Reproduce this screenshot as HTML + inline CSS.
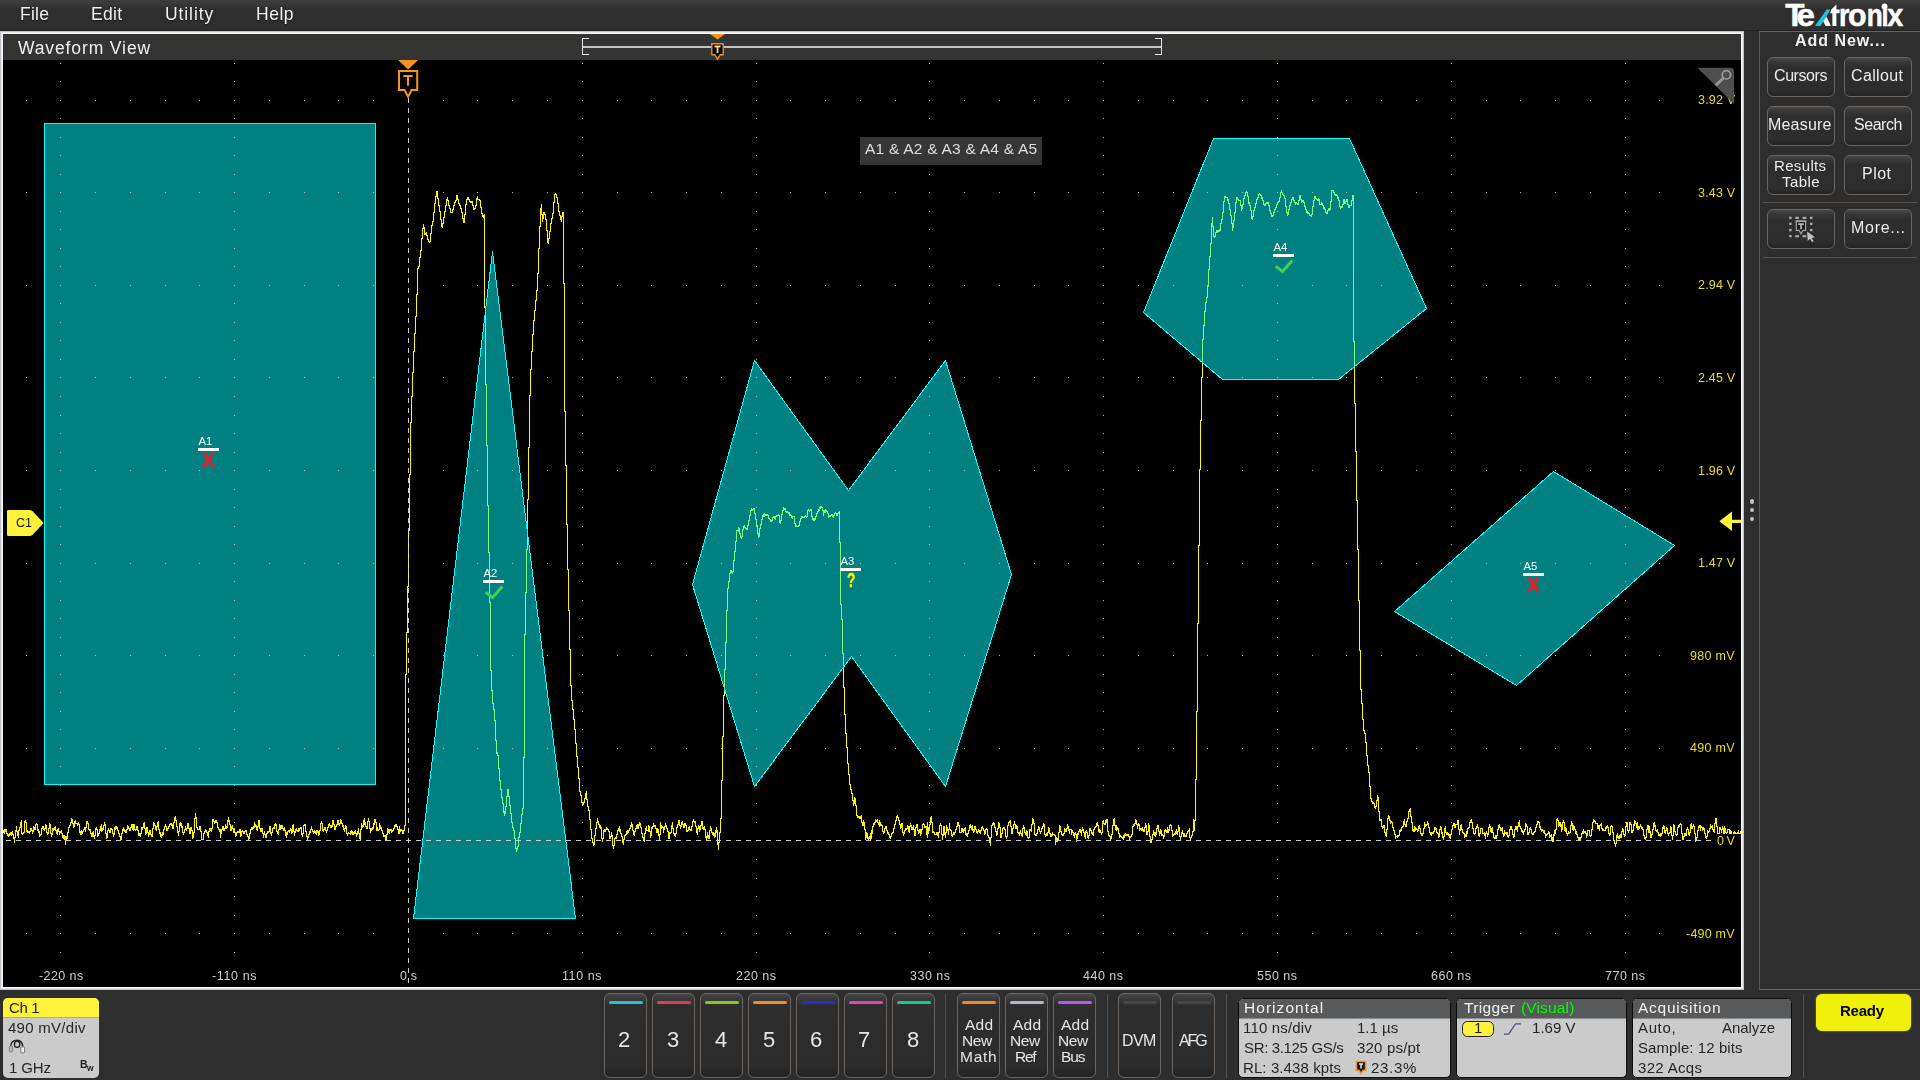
<!DOCTYPE html>
<html><head><meta charset="utf-8"><title>Waveform View</title>
<style>
*{box-sizing:border-box;margin:0;padding:0}
html,body{width:1920px;height:1080px;overflow:hidden;background:#2e2e2e;font-family:"Liberation Sans",sans-serif;}
body{position:relative}
.a{position:absolute}
.t{position:absolute;white-space:nowrap;line-height:1;will-change:transform;}
.menubar{left:0;top:0;width:1920px;height:31px;background:linear-gradient(#3e3e3e 0px,#3b3b3b 2.5px,#2e2e2e 9.5px,#2e2e2e 29.8px,#222 30px,#222 31px);}
.wvpanel{left:0;top:31px;width:1744px;height:959px;background:#000;box-shadow:inset 0 0 0 1px #c2c3c8,inset 0 0 0 2px #e7e8ec,inset 0 0 0 3px #f9f9fc;}
.wvtitle{left:3px;top:34px;width:1738px;height:26px;background:#343432;}
.rpanel{left:1759px;top:31px;width:170px;height:959px;border:1px solid #6a625c;border-left-color:#57585c;background:#2e2e2e;}
.btn{position:absolute;border:1px solid #6c645e;border-radius:6px;background:linear-gradient(#464748 0,#3a3a3b 3px,#2e2e2e 9px,#2d2d2d 32px,#232323 39px);}
.rb{width:68px;height:40px;}
.cb{top:993px;width:43px;height:85px;border-radius:6px;background:linear-gradient(#454546 0,#39393a 5px,#2d2d2d 13px,#2c2c2c 72px,#232323 84px);}
.cb i{position:absolute;left:4px;top:7px;width:34px;height:3px;border-radius:2px;display:block}
.sep{position:absolute;width:1px;background:#57514d;top:994px;height:84px}
.badge{position:absolute;top:998px;height:80px;border:1px solid #0c0c0c;border-radius:5px;background:#cbcbcb;overflow:hidden}
.badge .h{position:absolute;left:0;top:0;right:0;height:20px;background:#58595b;border-bottom:1px solid #8e8e8e}
</style></head><body>

<div class="a menubar"></div>
<div class="t" style="left:19.80px;top:6.00px;font-size:17.5px;color:#f2f2f2;letter-spacing:0.243px;text-shadow:0 1px 1px rgba(0,0,0,.6);">File</div>
<div class="t" style="left:91.20px;top:6.00px;font-size:17.5px;color:#f2f2f2;letter-spacing:0.335px;text-shadow:0 1px 1px rgba(0,0,0,.6);">Edit</div>
<div class="t" style="left:164.50px;top:6.00px;font-size:17.5px;color:#f2f2f2;letter-spacing:0.911px;text-shadow:0 1px 1px rgba(0,0,0,.6);">Utility</div>
<div class="t" style="left:256.20px;top:6.00px;font-size:17.5px;color:#f2f2f2;letter-spacing:0.511px;text-shadow:0 1px 1px rgba(0,0,0,.6);">Help</div>
<svg class="a" style="left:1784px;top:2px" width="124" height="28" viewBox="0 0 124 28">
<g fill="#fff" stroke="#fff" stroke-width="0.5" font-family="Liberation Sans" font-weight="bold" font-size="31">
<text x="1.2" y="24.07" textLength="19.2" lengthAdjust="spacingAndGlyphs">T</text>
<text x="12.6" y="24.07" textLength="18.4" lengthAdjust="spacingAndGlyphs">e</text>
<text x="55" y="24.07" textLength="10.5" lengthAdjust="spacingAndGlyphs">r</text>
<text x="64" y="24.07" textLength="18.6" lengthAdjust="spacingAndGlyphs">o</text>
<text x="82.8" y="24.07" textLength="16" lengthAdjust="spacingAndGlyphs">n</text>
<text x="97.6" y="24.07" textLength="7" lengthAdjust="spacingAndGlyphs">ı</text>
<text x="103.3" y="24.07" textLength="16" lengthAdjust="spacingAndGlyphs">x</text>
</g>
<circle cx="100.6" cy="4.5" r="2.9" fill="#fff"/>
<polygon points="30.9,24.07 36.6,24.07 46.4,7.5 42.7,7.5" fill="#22c3e0"/>
<polygon points="39.2,19.2 42.4,14.6 47,24.07 41.6,24.07" fill="#fff"/>
<path d="M47.3 7.5L52.4 2.4V7.5H55.6V11.2H52.4V24.07H48.4V11.2H46.2Z" fill="#fff"/>
</svg>
<div class="a wvpanel"></div><div class="a wvtitle"></div>
<div class="t" style="left:17.50px;top:40.00px;font-size:17.5px;color:#f0f0f0;letter-spacing:0.881px;">Waveform View</div>
<svg class="a" style="left:570px;top:34px" width="610" height="28" viewBox="570 34 610 28" shape-rendering="crispEdges">
<path d="M589 38.5H582.5V54.5H589" fill="none" stroke="#e6e6e6" stroke-width="1"/>
<path d="M1155 38.5H1161.5V54.5H1155" fill="none" stroke="#e6e6e6" stroke-width="1"/>
<rect x="583" y="46" width="578" height="2" fill="#c4c4c4"/>
<g shape-rendering="geometricPrecision">
<polygon points="710,34 725,34 717.5,39.5" fill="#f7931e"/>
<path d="M711.8 43.8H723.2V54.8H720.2L717.5 59.2L714.8 54.8H711.8Z" fill="#000" stroke="#f08c22" stroke-width="1.4"/>
<path d="M714.5 46.5H720.5M717.5 46.5V53" stroke="#f6d2a8" stroke-width="1.8" fill="none"/>
</g></svg>
<svg class="a" style="left:0;top:0" width="1744" height="990" viewBox="0 0 1744 990">
<defs><clipPath id="cp"><rect x="3" y="60" width="1738" height="927"/></clipPath></defs><g clip-path="url(#cp)">
<g shape-rendering="crispEdges">
<path d="M3 830v3M4 829v5M5 829v3M6 829v5M7 833v3M8 834v3M9 833v3M10 832v3M11 832v4M12 831v4M13 834v5M14 837v6M15 830v8M16 826v6M17 831v5M18 830v8M19 827v4M20 822v6M21 820v14M22 833v2M23 832v2M24 821v12M25 820v3M26 822v10M27 830v3M28 831v2M29 831v3M30 828v4M31 828v3M32 830v4M33 826v6M34 827v3M35 824v6M36 823v2M37 824v7M38 829v4M39 831v6M40 834v2M41 828v7M42 826v3M43 826v4M44 828v3M45 824v5M46 825v8M47 832v3M48 828v6M49 823v6M50 824v10M51 833v4M52 828v7M53 828v3M54 827v3M55 826v5M56 830v4M57 829v6M58 828v4M59 831v4M60 831v2M61 830v4M62 833v5M63 835v4M64 835v5M65 836v9M66 836v4M67 832v7M68 827v6M69 825v3M70 822v4M71 818v5M72 819v5M73 823v5M74 821v6M75 820v4M76 823v1M77 823v3M78 822v3M79 824v9M80 831v4M81 830v5M82 831v3M83 829v3M84 827v3M85 827v5M86 821v7M87 821v3M88 823v7M89 829v2M90 829v5M91 833v4M92 832v5M93 831v6M94 835v4M95 828v8M96 827v3M97 829v8M98 833v3M99 829v5M100 826v5M101 824v8M102 828v3M103 825v5M104 822v4M105 824v10M106 833v6M107 830v8M108 828v3M109 830v3M110 828v5M111 828v2M112 829v5M113 833v4M114 827v8M115 826v4M116 826v3M117 827v4M118 830v4M119 833v4M120 836v4M121 833v7M122 829v5M123 827v4M124 829v3M125 830v3M126 829v4M127 825v5M128 826v3M129 828v3M130 827v4M131 824v4M132 824v6M133 824v7M134 824v6M135 829v2M136 826v4M137 826v5M138 830v6M139 833v3M140 833v4M141 827v7M142 827v3M143 823v5M144 822v7M145 828v7M146 827v7M147 827v6M148 832v5M149 830v5M150 830v5M151 834v3M152 828v9M153 822v7M154 823v3M155 825v5M156 826v5M157 822v5M158 821v9M159 829v5M160 832v5M161 834v4M162 832v4M163 829v6M164 826v4M165 824v3M166 826v5M167 828v3M168 826v3M169 824v3M170 823v2M171 823v3M172 824v5M173 822v7M174 817v6M175 816v5M176 820v7M177 826v7M178 831v5M179 823v9M180 822v4M181 823v5M182 826v7M183 832v3M184 829v4M185 826v4M186 828v3M187 823v6M188 823v6M189 828v6M190 827v7M191 827v4M192 830v9M193 832v6M194 818v15M195 813v6M196 817v11M197 827v3M198 829v1M199 826v4M200 826v6M201 831v9M202 839v1M203 833v7M204 831v3M205 829v3M206 830v3M207 832v4M208 831v7M209 828v4M210 828v3M211 828v4M212 819v10M213 819v3M214 821v3M215 820v3M216 820v3M217 822v6M218 827v3M219 829v3M220 829v9M221 829v5M222 826v4M223 826v5M224 828v3M225 824v5M226 826v3M227 820v8M228 817v5M229 820v5M230 824v7M231 826v5M232 825v4M233 828v5M234 828v5M235 832v5M236 832v4M237 831v2M238 831v2M239 829v4M240 829v8M241 831v5M242 830v2M243 831v3M244 831v3M245 830v2M246 830v5M247 834v3M248 836v4M249 833v6M250 829v5M251 827v3M252 827v3M253 826v3M254 822v6M255 824v3M256 825v5M257 826v5M258 820v7M259 820v9M260 828v4M261 828v4M262 828v6M263 833v5M264 831v4M265 834v4M266 833v5M267 831v3M268 831v2M269 826v6M270 826v8M271 832v4M272 828v5M273 827v2M274 824v5M275 823v3M276 824v8M277 831v3M278 829v6M279 824v6M280 825v5M281 825v4M282 825v4M283 828v3M284 827v4M285 830v6M286 832v6M287 831v4M288 830v2M289 830v3M290 828v3M291 829v5M292 825v8M293 824v8M294 831v5M295 829v4M296 828v3M297 830v2M298 828v4M299 828v3M300 827v2M301 827v8M302 833v4M303 825v9M304 824v2M305 824v8M306 831v6M307 836v4M308 834v4M309 831v4M310 829v4M311 826v4M312 829v3M313 831v3M314 830v3M315 831v3M316 830v5M317 830v3M318 831v5M319 830v5M320 823v8M321 821v3M322 823v8M323 829v3M324 827v3M325 827v4M326 830v3M327 827v4M328 824v4M329 823v3M330 825v3M331 825v3M332 820v7M333 820v5M334 824v6M335 826v4M336 824v3M337 820v5M338 820v5M339 823v3M340 819v5M341 820v4M342 823v4M343 825v5M344 828v4M345 825v4M346 826v8M347 833v3M348 832v2M349 833v1M350 831v4M351 830v4M352 831v4M353 832v3M354 831v3M355 830v4M356 833v4M357 831v4M358 828v6M359 833v6M360 829v11M361 823v7M362 825v3M363 820v7M364 818v7M365 822v5M366 826v3M367 821v8M368 818v4M369 821v8M370 828v5M371 828v3M372 827v3M373 823v6M374 819v6M375 819v4M376 822v9M377 827v4M378 829v2M379 823v7M380 825v4M381 827v4M382 830v4M383 833v4M384 835v2M385 835v6M386 834v7M387 828v7M388 829v4M389 829v5M390 829v2M391 829v4M392 830v2M393 828v3M394 825v4M395 824v3M396 824v3M397 826v4M398 829v5M399 826v8M400 829v3M401 829v2M402 830v4M403 830v4M404 825v6M405 674v152M406 632v43M407 586v47M408 530v57M409 474v57M410 422v53M411 396v27M412 372v25M413 351v22M414 333v19M415 316v18M416 294v23M417 268v27M418 266v3M419 257v10M420 250v8M421 238v13M422 228v11M423 224v5M424 227v8M425 233v2M426 232v4M427 235v5M428 239v3M429 241v2M430 233v9M431 225v9M432 221v5M433 212v10M434 203v10M435 196v8M436 191v6M437 191v8M438 198v8M439 205v7M440 211v9M441 219v8M442 223v5M443 217v7M444 211v7M445 205v7M446 199v7M447 197v4M448 200v6M449 205v4M450 208v5M451 212v1M452 209v4M453 205v5M454 202v4M455 200v3M456 195v6M457 195v5M458 199v5M459 203v3M460 205v4M461 208v5M462 212v7M463 218v5M464 214v9M465 204v11M466 199v6M467 197v3M468 197v3M469 199v3M470 201v2M471 201v2M472 201v5M473 205v5M474 208v2M475 205v4M476 198v8M477 196v4M478 199v1M479 199v2M480 200v8M481 207v7M482 213v4M483 215v3M484 214v94M485 307v78M486 384v62M487 445v61M488 505v48M489 552v51M490 602v69M491 670v21M492 690v14M493 703v7M494 709v12M495 720v21M496 740v14M497 752v4M498 755v14M499 768v13M500 780v10M501 789v9M502 797v7M503 803v10M504 811v5M505 806v8M506 796v11M507 789v8M508 789v8M509 796v10M510 805v9M511 813v10M512 822v6M513 827v4M514 830v9M515 838v11M516 848v4M517 846v4M518 837v10M519 832v6M520 823v10M521 814v10M522 808v7M523 757v52M524 634v124M525 592v43M526 549v44M527 499v51M528 447v53M529 395v53M530 369v27M531 351v19M532 334v18M533 320v15M534 310v11M535 300v11M536 290v11M537 273v18M538 248v26M539 226v23M540 208v19M541 204v11M542 214v8M543 212v7M544 212v3M545 214v6M546 219v12M547 230v13M548 238v6M549 231v8M550 223v9M551 218v6M552 213v6M553 202v12M554 194v9M555 193v2M556 194v4M557 197v7M558 203v9M559 211v5M560 215v5M561 216v6M562 212v5M563 212v72M564 283v129M565 411v55M566 465v60M567 524v46M568 569v42M569 610v40M570 649v37M571 685v16M572 700v10M573 709v11M574 719v11M575 729v15M576 743v14M577 756v12M578 767v12M579 778v14M580 791v5M581 795v8M582 802v4M583 802v3M584 798v5M585 793v6M586 791v9M587 799v8M588 806v5M589 810v10M590 819v11M591 829v10M592 838v5M593 842v4M594 835v10M595 828v8M596 822v7M597 818v5M598 821v4M599 824v4M600 825v4M601 827v12M602 838v4M603 830v9M604 829v3M605 829v3M606 827v3M607 828v2M608 829v3M609 831v8M610 836v3M611 832v5M612 835v11M613 845v4M614 838v8M615 837v2M616 834v5M617 830v5M618 828v3M619 826v6M620 829v5M621 833v4M622 836v7M623 839v6M624 835v5M625 834v2M626 831v4M627 830v4M628 830v3M629 828v3M630 825v4M631 822v5M632 824v7M633 830v5M634 831v5M635 828v4M636 825v4M637 824v5M638 824v5M639 822v4M640 823v5M641 827v7M642 833v5M643 837v4M644 833v9M645 828v6M646 826v5M647 830v1M648 825v7M649 826v6M650 831v7M651 827v9M652 826v3M653 823v4M654 825v2M655 825v4M656 828v5M657 828v5M658 829v7M659 834v7M660 822v13M661 825v4M662 826v2M663 827v6M664 826v4M665 823v4M666 825v4M667 828v4M668 831v8M669 832v7M670 832v2M671 825v8M672 822v7M673 828v6M674 833v3M675 833v4M676 827v7M677 824v4M678 820v5M679 820v6M680 825v4M681 822v5M682 821v4M683 824v4M684 823v5M685 823v3M686 825v7M687 830v2M688 827v4M689 826v4M690 829v2M691 826v5M692 821v6M693 819v3M694 821v2M695 821v6M696 826v7M697 828v7M698 825v4M699 826v6M700 825v5M701 821v5M702 821v8M703 827v3M704 826v4M705 829v9M706 836v4M707 832v6M708 835v4M709 830v9M710 826v5M711 828v5M712 832v3M713 832v4M714 833v5M715 830v7M716 827v6M717 830v15M718 842v8M719 832v11M720 818v15M721 780v39M722 736v45M723 695v42M724 669v27M725 642v28M726 610v33M727 588v23M728 581v8M729 573v9M730 570v4M731 570v3M732 571v3M733 560v12M734 551v10M735 541v11M736 530v12M737 530v1M738 527v5M739 528v6M740 533v5M741 536v3M742 529v8M743 526v4M744 525v3M745 527v2M746 528v2M747 525v5M748 520v6M749 515v6M750 510v6M751 508v3M752 509v2M753 508v2M754 508v6M755 513v7M756 519v7M757 525v9M758 533v5M759 528v9M760 524v5M761 519v6M762 515v5M763 514v3M764 513v4M765 514v2M766 514v2M767 514v2M768 515v4M769 518v2M770 519v3M771 520v2M772 517v4M773 516v2M774 516v3M775 516v4M776 515v2M777 515v1M778 514v2M779 515v8M780 520v4M781 514v7M782 510v5M783 507v4M784 508v2M785 508v4M786 511v2M787 511v2M788 512v2M789 512v4M790 514v2M791 515v3M792 516v3M793 516v1M794 516v8M795 523v4M796 525v2M797 526v1M798 525v2M799 521v5M800 518v4M801 516v3M802 516v2M803 517v1M804 516v2M805 515v2M806 516v2M807 510v7M808 509v2M809 510v2M810 509v2M811 509v8M812 516v4M813 518v3M814 518v3M815 516v4M816 513v4M817 511v3M818 509v3M819 507v4M820 506v3M821 506v2M822 507v4M823 510v6M824 510v3M825 509v4M826 510v2M827 511v3M828 513v5M829 515v2M830 515v2M831 514v2M832 514v3M833 515v3M834 513v3M835 512v2M836 513v3M837 513v3M838 512v2M839 511v32M840 542v63M841 604v16M842 619v35M843 653v35M844 687v28M845 714v20M846 733v15M847 747v17M848 763v12M849 774v11M850 784v6M851 789v5M852 793v8M853 800v6M854 797v7M855 798v8M856 805v11M857 815v3M858 816v2M859 816v3M860 816v3M861 815v8M862 822v4M863 820v6M864 822v8M865 829v11M866 832v6M867 833v6M868 837v3M869 836v3M870 833v7M871 830v9M872 826v8M873 823v4M874 822v3M875 819v4M876 820v2M877 819v4M878 822v3M879 820v7M880 822v4M881 824v2M882 825v7M883 831v3M884 828v5M885 826v3M886 826v5M887 830v4M888 832v3M889 834v4M890 836v3M891 833v4M892 832v2M893 828v5M894 824v5M895 820v5M896 816v5M897 815v3M898 817v4M899 820v5M900 824v5M901 823v5M902 823v10M903 832v4M904 830v4M905 828v3M906 828v2M907 825v4M908 826v6M909 826v7M910 823v4M911 825v5M912 827v3M913 825v5M914 829v7M915 827v9M916 824v4M917 824v7M918 830v4M919 829v4M920 829v7M921 829v5M922 824v6M923 823v2M924 824v4M925 826v2M926 826v9M927 822v16M928 827v7M929 824v7M930 817v8M931 816v7M932 822v11M933 831v2M934 832v3M935 834v1M936 832v3M937 832v4M938 832v6M939 825v8M940 823v3M941 825v10M942 834v6M943 826v10M944 826v9M945 832v6M946 825v8M947 827v4M948 829v6M949 823v7M950 829v2M951 830v6M952 834v3M953 832v3M954 832v3M955 829v4M956 826v4M957 822v5M958 822v4M959 825v8M960 832v1M961 828v5M962 828v4M963 829v4M964 828v3M965 827v8M966 833v3M967 833v4M968 830v4M969 825v6M970 824v4M971 826v4M972 825v6M973 829v4M974 826v6M975 826v4M976 829v4M977 831v3M978 829v3M979 830v3M980 830v4M981 827v4M982 826v3M983 828v3M984 830v5M985 829v5M986 828v2M987 829v7M988 835v3M989 837v6M990 837v9M991 825v13M992 823v3M993 822v3M994 823v5M995 827v5M996 831v5M997 828v7M998 822v7M999 823v5M1000 827v11M1001 833v5M1002 828v6M1003 827v2M1004 827v3M1005 829v8M1006 836v3M1007 825v12M1008 822v4M1009 821v2M1010 820v7M1011 826v8M1012 828v6M1013 824v5M1014 821v4M1015 824v5M1016 825v4M1017 826v7M1018 832v2M1019 832v4M1020 830v4M1021 833v3M1022 828v9M1023 825v4M1024 827v6M1025 832v3M1026 830v6M1027 831v7M1028 837v2M1029 829v9M1030 829v2M1031 824v8M1032 818v7M1033 819v5M1034 823v12M1035 834v2M1036 833v3M1037 829v5M1038 826v4M1039 827v5M1040 831v3M1041 828v4M1042 826v3M1043 823v4M1044 824v11M1045 834v3M1046 833v3M1047 832v4M1048 827v6M1049 828v6M1050 833v4M1051 834v3M1052 832v4M1053 834v1M1054 834v2M1055 835v10M1056 837v5M1057 838v4M1058 832v8M1059 825v8M1060 826v6M1061 831v4M1062 834v2M1063 833v3M1064 828v6M1065 829v3M1066 828v4M1067 824v5M1068 826v5M1069 829v5M1070 829v1M1071 829v6M1072 830v3M1073 832v4M1074 833v5M1075 832v3M1076 834v8M1077 833v6M1078 831v4M1079 829v3M1080 829v4M1081 830v6M1082 827v4M1083 829v4M1084 832v5M1085 831v8M1086 830v3M1087 832v6M1088 835v4M1089 828v8M1090 828v3M1091 830v4M1092 832v3M1093 829v7M1094 827v3M1095 826v2M1096 823v4M1097 822v4M1098 825v7M1099 829v4M1100 830v3M1101 832v3M1102 821v12M1103 820v4M1104 823v2M1105 820v5M1106 819v4M1107 819v13M1108 831v5M1109 835v2M1110 836v4M1111 834v5M1112 825v10M1113 819v7M1114 818v8M1115 825v5M1116 825v6M1117 827v3M1118 828v6M1119 833v5M1120 835v2M1121 836v2M1122 837v2M1123 835v5M1124 834v4M1125 833v3M1126 834v2M1127 834v2M1128 834v3M1129 836v4M1130 836v2M1131 834v3M1132 826v9M1133 824v3M1134 823v3M1135 819v5M1136 820v5M1137 824v5M1138 823v3M1139 824v7M1140 828v2M1141 828v3M1142 827v4M1143 829v3M1144 827v5M1145 823v5M1146 825v10M1147 831v4M1148 823v9M1149 825v12M1150 836v7M1151 839v4M1152 834v6M1153 830v5M1154 832v4M1155 832v5M1156 828v7M1157 825v4M1158 825v7M1159 831v5M1160 829v5M1161 830v6M1162 834v2M1163 835v4M1164 830v7M1165 829v3M1166 830v3M1167 827v6M1168 829v4M1169 825v6M1170 824v2M1171 825v6M1172 830v7M1173 834v2M1174 833v2M1175 831v4M1176 829v5M1177 831v4M1178 825v7M1179 827v10M1180 836v4M1181 832v5M1182 830v4M1183 833v4M1184 833v4M1185 835v2M1186 833v4M1187 831v3M1188 830v2M1189 828v10M1190 837v3M1191 835v3M1192 831v5M1193 819v13M1194 820v11M1195 779v42M1196 711v69M1197 623v89M1198 545v79M1199 469v77M1200 420v50M1201 377v44M1202 339v39M1203 325v15M1204 311v15M1205 302v10M1206 297v6M1207 286v12M1208 269v18M1209 256v14M1210 243v14M1211 223v21M1212 217v10M1213 226v11M1214 236v2M1215 232v5M1216 230v3M1217 230v3M1218 230v2M1219 229v3M1220 223v8M1221 219v5M1222 212v8M1223 201v12M1224 196v6M1225 196v2M1226 197v1M1227 197v4M1228 199v5M1229 203v7M1230 209v7M1231 215v9M1232 223v8M1233 220v8M1234 212v9M1235 202v11M1236 197v6M1237 197v3M1238 199v2M1239 200v1M1240 200v6M1241 205v6M1242 204v5M1243 198v7M1244 195v4M1245 192v4M1246 191v2M1247 192v5M1248 196v8M1249 202v4M1250 205v6M1251 210v9M1252 216v4M1253 210v7M1254 207v4M1255 203v5M1256 199v5M1257 197v3M1258 194v4M1259 193v2M1260 194v2M1261 195v4M1262 197v4M1263 200v5M1264 204v2M1265 203v3M1266 202v2M1267 202v2M1268 202v4M1269 205v6M1270 210v4M1271 213v4M1272 215v2M1273 212v4M1274 209v4M1275 207v3M1276 204v4M1277 202v3M1278 201v2M1279 197v5M1280 192v6M1281 190v3M1282 192v3M1283 194v2M1284 195v4M1285 198v9M1286 206v7M1287 212v4M1288 209v6M1289 205v5M1290 202v4M1291 199v4M1292 197v3M1293 197v4M1294 200v3M1295 202v3M1296 202v2M1297 203v2M1298 200v5M1299 195v6M1300 195v5M1301 199v4M1302 200v2M1303 200v3M1304 202v5M1305 206v4M1306 209v4M1307 211v3M1308 212v2M1309 213v3M1310 215v1M1311 214v3M1312 206v9M1313 200v7M1314 196v5M1315 196v3M1316 198v2M1317 199v2M1318 198v3M1319 199v6M1320 204v1M1321 202v3M1322 203v3M1323 205v4M1324 207v3M1325 209v4M1326 212v2M1327 210v4M1328 208v3M1329 208v3M1330 201v9M1331 190v12M1332 190v1M1333 190v3M1334 192v3M1335 194v2M1336 194v2M1337 195v4M1338 197v4M1339 200v7M1340 206v3M1341 206v2M1342 204v4M1343 199v6M1344 199v5M1345 201v3M1346 199v3M1347 199v6M1348 204v4M1349 205v3M1350 205v1M1351 200v6M1352 195v6M1353 195v147M1354 341v63M1355 403v49M1356 451v50M1357 500v50M1358 549v52M1359 600v51M1360 650v40M1361 689v15M1362 703v17M1363 719v12M1364 730v4M1365 733v10M1366 742v14M1367 755v11M1368 765v8M1369 772v15M1370 786v13M1371 798v4M1372 801v3M1373 802v2M1374 803v5M1375 806v3M1376 800v7M1377 795v6M1378 797v15M1379 811v10M1380 819v2M1381 819v8M1382 826v3M1383 825v3M1384 825v8M1385 832v4M1386 829v8M1387 818v12M1388 815v4M1389 816v5M1390 820v4M1391 821v2M1392 822v6M1393 827v4M1394 830v5M1395 834v5M1396 836v1M1397 835v3M1398 835v2M1399 830v6M1400 829v3M1401 827v4M1402 826v2M1403 821v6M1404 819v6M1405 824v3M1406 821v6M1407 818v4M1408 811v8M1409 809v3M1410 808v9M1411 816v7M1412 822v9M1413 829v3M1414 826v6M1415 827v4M1416 828v2M1417 829v3M1418 826v5M1419 825v4M1420 828v6M1421 833v3M1422 833v3M1423 828v6M1424 822v7M1425 824v3M1426 824v2M1427 821v4M1428 823v5M1429 827v6M1430 832v3M1431 832v4M1432 832v2M1433 831v3M1434 827v5M1435 827v3M1436 828v5M1437 832v2M1438 833v5M1439 829v8M1440 826v4M1441 827v7M1442 832v6M1443 836v4M1444 828v9M1445 826v7M1446 832v3M1447 832v3M1448 833v3M1449 834v4M1450 834v5M1451 829v6M1452 825v5M1453 823v3M1454 823v5M1455 824v4M1456 824v1M1457 820v5M1458 820v10M1459 829v6M1460 825v6M1461 824v6M1462 829v4M1463 832v2M1464 833v5M1465 834v3M1466 831v6M1467 828v6M1468 827v2M1469 822v6M1470 820v3M1471 819v4M1472 822v7M1473 828v6M1474 833v2M1475 828v6M1476 826v3M1477 824v4M1478 827v9M1479 833v4M1480 828v6M1481 828v1M1482 828v6M1483 833v1M1484 832v4M1485 833v6M1486 831v3M1487 833v4M1488 827v8M1489 824v4M1490 826v6M1491 828v5M1492 827v6M1493 832v6M1494 837v2M1495 835v4M1496 835v4M1497 829v7M1498 825v5M1499 824v4M1500 827v4M1501 828v3M1502 827v7M1503 833v4M1504 830v6M1505 832v2M1506 832v3M1507 832v5M1508 835v3M1509 829v7M1510 826v4M1511 826v4M1512 829v6M1513 834v4M1514 829v8M1515 826v4M1516 826v4M1517 826v6M1518 822v5M1519 820v7M1520 826v3M1521 828v4M1522 830v3M1523 831v4M1524 829v3M1525 823v7M1526 824v3M1527 826v9M1528 832v3M1529 828v5M1530 827v3M1531 829v5M1532 833v2M1533 832v3M1534 831v2M1535 827v5M1536 824v4M1537 821v4M1538 821v2M1539 822v6M1540 826v4M1541 829v3M1542 829v2M1543 830v3M1544 830v4M1545 833v5M1546 834v2M1547 833v2M1548 831v3M1549 832v6M1550 835v2M1551 834v7M1552 837v5M1553 834v8M1554 830v6M1555 829v5M1556 819v11M1557 818v3M1558 820v7M1559 822v4M1560 822v5M1561 824v8M1562 822v8M1563 820v3M1564 822v9M1565 827v5M1566 828v6M1567 833v3M1568 831v3M1569 832v2M1570 825v8M1571 821v5M1572 823v7M1573 825v6M1574 826v4M1575 829v5M1576 831v4M1577 834v4M1578 837v3M1579 837v4M1580 837v3M1581 833v5M1582 831v3M1583 829v5M1584 831v2M1585 831v3M1586 833v5M1587 830v6M1588 830v1M1589 830v6M1590 835v2M1591 829v7M1592 822v8M1593 819v4M1594 820v2M1595 821v3M1596 823v1M1597 823v6M1598 825v4M1599 825v6M1600 824v2M1601 823v6M1602 828v3M1603 829v2M1604 830v1M1605 827v4M1606 826v3M1607 825v3M1608 827v7M1609 833v3M1610 826v9M1611 825v2M1612 826v7M1613 832v9M1614 840v4M1615 843v4M1616 835v9M1617 833v5M1618 836v3M1619 835v4M1620 834v4M1621 831v7M1622 828v4M1623 829v6M1624 834v3M1625 826v10M1626 822v5M1627 822v9M1628 830v3M1629 822v9M1630 822v3M1631 824v9M1632 830v3M1633 824v7M1634 820v6M1635 821v3M1636 823v5M1637 822v8M1638 826v4M1639 826v3M1640 824v3M1641 826v3M1642 827v3M1643 829v7M1644 835v4M1645 837v3M1646 829v9M1647 825v5M1648 825v8M1649 826v7M1650 831v7M1651 834v4M1652 829v6M1653 823v7M1654 822v5M1655 825v6M1656 830v2M1657 829v4M1658 832v4M1659 834v2M1660 833v4M1661 833v3M1662 827v7M1663 825v4M1664 826v7M1665 830v4M1666 827v4M1667 828v6M1668 833v3M1669 832v2M1670 826v7M1671 827v9M1672 835v5M1673 824v12M1674 825v7M1675 831v4M1676 834v2M1677 827v8M1678 825v3M1679 824v3M1680 823v2M1681 824v10M1682 833v7M1683 836v4M1684 833v4M1685 833v3M1686 829v7M1687 827v3M1688 829v6M1689 832v4M1690 824v9M1691 823v6M1692 826v3M1693 824v3M1694 826v8M1695 833v9M1696 837v3M1697 830v8M1698 826v5M1699 825v3M1700 825v6M1701 826v2M1702 827v4M1703 827v3M1704 828v6M1705 833v5M1706 836v3M1707 830v7M1708 831v2M1709 828v4M1710 824v5M1711 826v2M1712 825v5M1713 829v3M1714 823v10M1715 818v6M1716 818v9M1717 826v9M1718 833v4M1719 827v7M1720 827v3M1721 829v4M1722 826v4M1723 828v8M1724 826v9M1725 828v5M1726 832v4M1727 829v4M1728 829v1M1729 829v7M1730 830v4M1731 831v6M1732 834v4M1733 832v3M1734 831v3M1735 832v5M1736 833v4M1737 832v3M1738 830v4M1739 833v2M1740 831v3" transform="translate(0.5,0)" stroke="#fff400" stroke-width="1" fill="none"/>
<polygon points="44.5,123.5 375.5,123.5 375.5,784.5 44.5,784.5" fill="rgba(0,255,255,0.5)" stroke="none"/>
<polygon points="492.5,251.5 413.5,918.5 575.5,918.5" fill="rgba(0,255,255,0.5)" stroke="none"/>
<polygon points="692.5,584.5 754.5,360.5 848.5,490.5 945.5,360.5 1011.5,574.5 945.5,786.5 851.5,656.5 754.5,786.5" fill="rgba(0,255,255,0.5)" stroke="none"/>
<polygon points="1213.5,138.5 1349.5,138.5 1426.5,308.5 1338.5,379.5 1222.5,379.5 1143.5,312.5" fill="rgba(0,255,255,0.5)" stroke="none"/>
<polygon points="1553.5,471.5 1674.5,545.5 1516.5,685.5 1394.5,611.5" fill="rgba(0,255,255,0.5)" stroke="none"/>
<polygon points="44.5,123.5 375.5,123.5 375.5,784.5 44.5,784.5" fill="none" stroke="#00ffff" stroke-width="1"/>
<polygon points="492.5,251.5 413.5,918.5 575.5,918.5" fill="none" stroke="#00ffff" stroke-width="1"/>
<polygon points="692.5,584.5 754.5,360.5 848.5,490.5 945.5,360.5 1011.5,574.5 945.5,786.5 851.5,656.5 754.5,786.5" fill="none" stroke="#00ffff" stroke-width="1"/>
<polygon points="1213.5,138.5 1349.5,138.5 1426.5,308.5 1338.5,379.5 1222.5,379.5 1143.5,312.5" fill="none" stroke="#00ffff" stroke-width="1"/>
<polygon points="1553.5,471.5 1674.5,545.5 1516.5,685.5 1394.5,611.5" fill="none" stroke="#00ffff" stroke-width="1"/>
<path d="M26 100h1M26 192h1M26 285h1M26 377h1M26 470h1M26 563h1M26 655h1M26 748h1M26 933h1M60 63h1M60 81h1M60 100h1M60 118h1M60 137h1M60 155h1M60 174h1M60 192h1M60 211h1M60 229h1M60 248h1M60 266h1M60 285h1M60 303h1M60 322h1M60 340h1M60 359h1M60 377h1M60 396h1M60 415h1M60 433h1M60 452h1M60 470h1M60 489h1M60 507h1M60 526h1M60 544h1M60 563h1M60 581h1M60 600h1M60 618h1M60 637h1M60 655h1M60 674h1M60 692h1M60 711h1M60 729h1M60 748h1M60 766h1M60 785h1M60 803h1M60 822h1M60 859h1M60 878h1M60 896h1M60 915h1M60 933h1M60 952h1M95 100h1M95 192h1M95 285h1M95 377h1M95 470h1M95 563h1M95 655h1M95 748h1M95 933h1M130 100h1M130 192h1M130 285h1M130 377h1M130 470h1M130 563h1M130 655h1M130 748h1M130 933h1M165 100h1M165 192h1M165 285h1M165 377h1M165 470h1M165 563h1M165 655h1M165 748h1M165 933h1M199 100h1M199 192h1M199 285h1M199 377h1M199 470h1M199 563h1M199 655h1M199 748h1M199 933h1M234 63h1M234 81h1M234 100h1M234 118h1M234 137h1M234 155h1M234 174h1M234 192h1M234 211h1M234 229h1M234 248h1M234 266h1M234 285h1M234 303h1M234 322h1M234 340h1M234 359h1M234 377h1M234 396h1M234 415h1M234 433h1M234 452h1M234 470h1M234 489h1M234 507h1M234 526h1M234 544h1M234 563h1M234 581h1M234 600h1M234 618h1M234 637h1M234 655h1M234 674h1M234 692h1M234 711h1M234 729h1M234 748h1M234 766h1M234 785h1M234 803h1M234 822h1M234 859h1M234 878h1M234 896h1M234 915h1M234 933h1M234 952h1M269 100h1M269 192h1M269 285h1M269 377h1M269 470h1M269 563h1M269 655h1M269 748h1M269 933h1M304 100h1M304 192h1M304 285h1M304 377h1M304 470h1M304 563h1M304 655h1M304 748h1M304 933h1M338 100h1M338 192h1M338 285h1M338 377h1M338 470h1M338 563h1M338 655h1M338 748h1M338 933h1M373 100h1M373 192h1M373 285h1M373 377h1M373 470h1M373 563h1M373 655h1M373 748h1M373 933h1M443 100h1M443 192h1M443 285h1M443 377h1M443 470h1M443 563h1M443 655h1M443 748h1M443 933h1M477 100h1M477 192h1M477 285h1M477 377h1M477 470h1M477 563h1M477 655h1M477 748h1M477 933h1M512 100h1M512 192h1M512 285h1M512 377h1M512 470h1M512 563h1M512 655h1M512 748h1M512 933h1M547 100h1M547 192h1M547 285h1M547 377h1M547 470h1M547 563h1M547 655h1M547 748h1M547 933h1M582 63h1M582 81h1M582 100h1M582 118h1M582 137h1M582 155h1M582 174h1M582 192h1M582 211h1M582 229h1M582 248h1M582 266h1M582 285h1M582 303h1M582 322h1M582 340h1M582 359h1M582 377h1M582 396h1M582 415h1M582 433h1M582 452h1M582 470h1M582 489h1M582 507h1M582 526h1M582 544h1M582 563h1M582 581h1M582 600h1M582 618h1M582 637h1M582 655h1M582 674h1M582 692h1M582 711h1M582 729h1M582 748h1M582 766h1M582 785h1M582 803h1M582 822h1M582 859h1M582 878h1M582 896h1M582 915h1M582 933h1M582 952h1M617 100h1M617 192h1M617 285h1M617 377h1M617 470h1M617 563h1M617 655h1M617 748h1M617 933h1M651 100h1M651 192h1M651 285h1M651 377h1M651 470h1M651 563h1M651 655h1M651 748h1M651 933h1M686 100h1M686 192h1M686 285h1M686 377h1M686 470h1M686 563h1M686 655h1M686 748h1M686 933h1M721 100h1M721 192h1M721 285h1M721 377h1M721 470h1M721 563h1M721 655h1M721 748h1M721 933h1M756 63h1M756 81h1M756 100h1M756 118h1M756 137h1M756 155h1M756 174h1M756 192h1M756 211h1M756 229h1M756 248h1M756 266h1M756 285h1M756 303h1M756 322h1M756 340h1M756 359h1M756 377h1M756 396h1M756 415h1M756 433h1M756 452h1M756 470h1M756 489h1M756 507h1M756 526h1M756 544h1M756 563h1M756 581h1M756 600h1M756 618h1M756 637h1M756 655h1M756 674h1M756 692h1M756 711h1M756 729h1M756 748h1M756 766h1M756 785h1M756 803h1M756 822h1M756 859h1M756 878h1M756 896h1M756 915h1M756 933h1M756 952h1M790 100h1M790 192h1M790 285h1M790 377h1M790 470h1M790 563h1M790 655h1M790 748h1M790 933h1M825 100h1M825 192h1M825 285h1M825 377h1M825 470h1M825 563h1M825 655h1M825 748h1M825 933h1M860 100h1M860 192h1M860 285h1M860 377h1M860 470h1M860 563h1M860 655h1M860 748h1M860 933h1M895 100h1M895 192h1M895 285h1M895 377h1M895 470h1M895 563h1M895 655h1M895 748h1M895 933h1M929 63h1M929 81h1M929 100h1M929 118h1M929 137h1M929 155h1M929 174h1M929 192h1M929 211h1M929 229h1M929 248h1M929 266h1M929 285h1M929 303h1M929 322h1M929 340h1M929 359h1M929 377h1M929 396h1M929 415h1M929 433h1M929 452h1M929 470h1M929 489h1M929 507h1M929 526h1M929 544h1M929 563h1M929 581h1M929 600h1M929 618h1M929 637h1M929 655h1M929 674h1M929 692h1M929 711h1M929 729h1M929 748h1M929 766h1M929 785h1M929 803h1M929 822h1M929 859h1M929 878h1M929 896h1M929 915h1M929 933h1M929 952h1M964 100h1M964 192h1M964 285h1M964 377h1M964 470h1M964 563h1M964 655h1M964 748h1M964 933h1M999 100h1M999 192h1M999 285h1M999 377h1M999 470h1M999 563h1M999 655h1M999 748h1M999 933h1M1034 100h1M1034 192h1M1034 285h1M1034 377h1M1034 470h1M1034 563h1M1034 655h1M1034 748h1M1034 933h1M1068 100h1M1068 192h1M1068 285h1M1068 377h1M1068 470h1M1068 563h1M1068 655h1M1068 748h1M1068 933h1M1103 63h1M1103 81h1M1103 100h1M1103 118h1M1103 137h1M1103 155h1M1103 174h1M1103 192h1M1103 211h1M1103 229h1M1103 248h1M1103 266h1M1103 285h1M1103 303h1M1103 322h1M1103 340h1M1103 359h1M1103 377h1M1103 396h1M1103 415h1M1103 433h1M1103 452h1M1103 470h1M1103 489h1M1103 507h1M1103 526h1M1103 544h1M1103 563h1M1103 581h1M1103 600h1M1103 618h1M1103 637h1M1103 655h1M1103 674h1M1103 692h1M1103 711h1M1103 729h1M1103 748h1M1103 766h1M1103 785h1M1103 803h1M1103 822h1M1103 859h1M1103 878h1M1103 896h1M1103 915h1M1103 933h1M1103 952h1M1138 100h1M1138 192h1M1138 285h1M1138 377h1M1138 470h1M1138 563h1M1138 655h1M1138 748h1M1138 933h1M1173 100h1M1173 192h1M1173 285h1M1173 377h1M1173 470h1M1173 563h1M1173 655h1M1173 748h1M1173 933h1M1207 100h1M1207 192h1M1207 285h1M1207 377h1M1207 470h1M1207 563h1M1207 655h1M1207 748h1M1207 933h1M1242 100h1M1242 192h1M1242 285h1M1242 377h1M1242 470h1M1242 563h1M1242 655h1M1242 748h1M1242 933h1M1277 63h1M1277 81h1M1277 100h1M1277 118h1M1277 137h1M1277 155h1M1277 174h1M1277 192h1M1277 211h1M1277 229h1M1277 248h1M1277 266h1M1277 285h1M1277 303h1M1277 322h1M1277 340h1M1277 359h1M1277 377h1M1277 396h1M1277 415h1M1277 433h1M1277 452h1M1277 470h1M1277 489h1M1277 507h1M1277 526h1M1277 544h1M1277 563h1M1277 581h1M1277 600h1M1277 618h1M1277 637h1M1277 655h1M1277 674h1M1277 692h1M1277 711h1M1277 729h1M1277 748h1M1277 766h1M1277 785h1M1277 803h1M1277 822h1M1277 859h1M1277 878h1M1277 896h1M1277 915h1M1277 933h1M1277 952h1M1312 100h1M1312 192h1M1312 285h1M1312 377h1M1312 470h1M1312 563h1M1312 655h1M1312 748h1M1312 933h1M1346 100h1M1346 192h1M1346 285h1M1346 377h1M1346 470h1M1346 563h1M1346 655h1M1346 748h1M1346 933h1M1381 100h1M1381 192h1M1381 285h1M1381 377h1M1381 470h1M1381 563h1M1381 655h1M1381 748h1M1381 933h1M1416 100h1M1416 192h1M1416 285h1M1416 377h1M1416 470h1M1416 563h1M1416 655h1M1416 748h1M1416 933h1M1451 63h1M1451 81h1M1451 100h1M1451 118h1M1451 137h1M1451 155h1M1451 174h1M1451 192h1M1451 211h1M1451 229h1M1451 248h1M1451 266h1M1451 285h1M1451 303h1M1451 322h1M1451 340h1M1451 359h1M1451 377h1M1451 396h1M1451 415h1M1451 433h1M1451 452h1M1451 470h1M1451 489h1M1451 507h1M1451 526h1M1451 544h1M1451 563h1M1451 581h1M1451 600h1M1451 618h1M1451 637h1M1451 655h1M1451 674h1M1451 692h1M1451 711h1M1451 729h1M1451 748h1M1451 766h1M1451 785h1M1451 803h1M1451 822h1M1451 859h1M1451 878h1M1451 896h1M1451 915h1M1451 933h1M1451 952h1M1486 100h1M1486 192h1M1486 285h1M1486 377h1M1486 470h1M1486 563h1M1486 655h1M1486 748h1M1486 933h1M1520 100h1M1520 192h1M1520 285h1M1520 377h1M1520 470h1M1520 563h1M1520 655h1M1520 748h1M1520 933h1M1555 100h1M1555 192h1M1555 285h1M1555 377h1M1555 470h1M1555 563h1M1555 655h1M1555 748h1M1555 933h1M1590 100h1M1590 192h1M1590 285h1M1590 377h1M1590 470h1M1590 563h1M1590 655h1M1590 748h1M1590 933h1M1625 63h1M1625 81h1M1625 100h1M1625 118h1M1625 137h1M1625 155h1M1625 174h1M1625 192h1M1625 211h1M1625 229h1M1625 248h1M1625 266h1M1625 285h1M1625 303h1M1625 322h1M1625 340h1M1625 359h1M1625 377h1M1625 396h1M1625 415h1M1625 433h1M1625 452h1M1625 470h1M1625 489h1M1625 507h1M1625 526h1M1625 544h1M1625 563h1M1625 581h1M1625 600h1M1625 618h1M1625 637h1M1625 655h1M1625 674h1M1625 692h1M1625 711h1M1625 729h1M1625 748h1M1625 766h1M1625 785h1M1625 803h1M1625 822h1M1625 859h1M1625 878h1M1625 896h1M1625 915h1M1625 933h1M1625 952h1M1659 100h1M1659 192h1M1659 285h1M1659 377h1M1659 470h1M1659 563h1M1659 655h1M1659 748h1M1659 933h1M1694 100h1M1694 192h1M1694 285h1M1694 377h1M1694 470h1M1694 563h1M1694 655h1M1694 748h1M1694 933h1M1729 100h1M1729 192h1M1729 285h1M1729 377h1M1729 470h1M1729 563h1M1729 655h1M1729 748h1M1729 933h1" transform="translate(0,0.5)" stroke="#bdb6b6" stroke-width="1" fill="none"/>
<path d="M6 840.5H1711" stroke="#cfcfcf" stroke-width="1" stroke-dasharray="5 5" fill="none"/>
<path d="M408.5 98V987" stroke="#cfcfcf" stroke-width="1" stroke-dasharray="5 5" fill="none"/>
</g>
<polygon points="398,60 418.2,60 408.1,69.6" fill="#f7931e"/>
<path d="M399 71H417.2V90H411.6L408.1 96.8L404.6 90H399Z" fill="#000" stroke="#f7931e" stroke-width="2"/>
<path d="M403.2 76H412.8M408 76V85.8" stroke="#f7931e" stroke-width="2" fill="none"/>
<path d="M8.3 510H29.5Q31.3 510 32.6 511.3L43.6 523L32.6 534.7Q31.3 536 29.5 536H8.3Q7 536 7 534.7V511.3Q7 510 8.3 510Z" fill="#fff23a"/>
<path d="M1719.3 521.3L1732 511.4V519.7H1741V523H1732V531Z" fill="#fff23a"/>
<rect x="198" y="448" width="21" height="3" fill="#ffffff"/>
<text x="198.6" y="445.1" font-size="11.3" fill="#ffffff" font-family="Liberation Sans" textLength="13.8" lengthAdjust="spacingAndGlyphs">A1</text>
<text x="201.9" y="467.1" font-size="20.3" font-weight="bold" fill="#ee1c24" stroke="#ee1c24" stroke-width="0.5" font-family="Liberation Sans" textLength="12.7" lengthAdjust="spacingAndGlyphs">X</text>
<rect x="483" y="580" width="21" height="3" fill="#ffffff"/>
<text x="483.6" y="577.1" font-size="11.3" fill="#ffffff" font-family="Liberation Sans" textLength="13.8" lengthAdjust="spacingAndGlyphs">A2</text>
<path d="M485.6 592.2L492.6 597.4L502.3 586.6" stroke="#45cf4f" stroke-width="3" fill="none"/>
<rect x="840" y="568" width="21" height="3" fill="#ffffff"/>
<text x="840.6" y="565.1" font-size="11.3" fill="#ffffff" font-family="Liberation Sans" textLength="13.8" lengthAdjust="spacingAndGlyphs">A3</text>
<text x="847.0" y="587.1" font-size="19.5" font-weight="bold" fill="#fff200" stroke="#fff200" stroke-width="0.4" font-family="Liberation Sans" textLength="8.4" lengthAdjust="spacingAndGlyphs">?</text>
<rect x="1273" y="254" width="21" height="3" fill="#ffffff"/>
<text x="1273.6" y="251.1" font-size="11.3" fill="#ffffff" font-family="Liberation Sans" textLength="13.8" lengthAdjust="spacingAndGlyphs">A4</text>
<path d="M1275.6 266.2L1282.6 271.4L1292.3 260.6" stroke="#45cf4f" stroke-width="3" fill="none"/>
<rect x="1523" y="573" width="21" height="3" fill="#ffffff"/>
<text x="1523.6" y="570.1" font-size="11.3" fill="#ffffff" font-family="Liberation Sans" textLength="13.8" lengthAdjust="spacingAndGlyphs">A5</text>
<text x="1526.9" y="592.1" font-size="20.3" font-weight="bold" fill="#ee1c24" stroke="#ee1c24" stroke-width="0.5" font-family="Liberation Sans" textLength="12.7" lengthAdjust="spacingAndGlyphs">X</text>
</g></svg>
<div class="t" style="left:16.10px;top:517.00px;font-size:12.5px;color:#111;">C</div>
<div class="t" style="left:25.20px;top:517.00px;font-size:12.5px;color:#111;">1</div>
<div class="a" style="left:860px;top:137px;width:182px;height:28px;background:#363636"></div>
<div class="t" style="left:865.40px;top:141.00px;font-size:15.5px;color:#dedede;letter-spacing:0.239px;">A1 &amp; A2 &amp; A3 &amp; A4 &amp; A5</div>
<div class="a" style="left:1692.6px;top:93.1px;width:48.4px;height:14px;background:#000"></div>
<div class="t" style="left:1697.60px;top:94.00px;font-size:12.5px;color:#e9dc28;letter-spacing:0.179px;">3.92 V</div>
<div class="a" style="left:1692.6px;top:186.1px;width:48.4px;height:14px;background:#000"></div>
<div class="t" style="left:1697.60px;top:187.00px;font-size:12.5px;color:#e9dc28;letter-spacing:0.179px;">3.43 V</div>
<div class="a" style="left:1692.6px;top:278.1px;width:48.4px;height:14px;background:#000"></div>
<div class="t" style="left:1697.60px;top:279.00px;font-size:12.5px;color:#e9dc28;letter-spacing:0.179px;">2.94 V</div>
<div class="a" style="left:1692.6px;top:371.1px;width:48.4px;height:14px;background:#000"></div>
<div class="t" style="left:1697.60px;top:372.00px;font-size:12.5px;color:#e9dc28;letter-spacing:0.179px;">2.45 V</div>
<div class="a" style="left:1692.6px;top:464.1px;width:48.4px;height:14px;background:#000"></div>
<div class="t" style="left:1697.60px;top:465.00px;font-size:12.5px;color:#e9dc28;letter-spacing:0.179px;">1.96 V</div>
<div class="a" style="left:1692.6px;top:556.1px;width:48.4px;height:14px;background:#000"></div>
<div class="t" style="left:1697.60px;top:557.00px;font-size:12.5px;color:#e9dc28;letter-spacing:0.179px;">1.47 V</div>
<div class="a" style="left:1685.0px;top:649.1px;width:56.0px;height:14px;background:#000"></div>
<div class="t" style="left:1690.00px;top:650.00px;font-size:12.5px;color:#e9dc28;letter-spacing:0.309px;">980 mV</div>
<div class="a" style="left:1685.0px;top:741.1px;width:56.0px;height:14px;background:#000"></div>
<div class="t" style="left:1690.00px;top:742.00px;font-size:12.5px;color:#e9dc28;letter-spacing:0.309px;">490 mV</div>
<div class="a" style="left:1711.7px;top:834.1px;width:29.3px;height:14px;background:#000"></div>
<div class="t" style="left:1716.70px;top:835.00px;font-size:12.5px;color:#e9dc28;letter-spacing:-0.414px;">0 V</div>
<div class="a" style="left:1681.1px;top:927.1px;width:59.9px;height:14px;background:#000"></div>
<div class="t" style="left:1686.10px;top:928.00px;font-size:12.5px;color:#e9dc28;letter-spacing:0.215px;">-490 mV</div>
<svg class="a" style="left:1690px;top:60px" width="50" height="50" viewBox="1690 60 50 50">
<path d="M1697.3 67.8H1730.5a3.5 3.5 0 0 1 3.5 3.5V104Z" fill="#4e4e4e"/>
<circle cx="1726.4" cy="74.8" r="4.2" fill="none" stroke="#9a9a9a" stroke-width="1.7"/>
<path d="M1723 78.4L1716.6 84.6" stroke="#9a9a9a" stroke-width="2.8" stroke-linecap="round"/></svg>
<div class="t" style="left:38.59px;top:970.00px;font-size:12.5px;color:#cdcdcd;letter-spacing:0.408px;">-220 ns</div>
<div class="t" style="left:212.19px;top:970.00px;font-size:12.5px;color:#cdcdcd;letter-spacing:0.631px;">-110 ns</div>
<div class="t" style="left:399.79px;top:970.00px;font-size:12.5px;color:#cdcdcd;letter-spacing:0.131px;">0 s</div>
<div class="t" style="left:562.29px;top:970.00px;font-size:12.5px;color:#cdcdcd;letter-spacing:0.588px;">110 ns</div>
<div class="t" style="left:735.84px;top:970.00px;font-size:12.5px;color:#cdcdcd;letter-spacing:0.504px;">220 ns</div>
<div class="t" style="left:909.64px;top:970.00px;font-size:12.5px;color:#cdcdcd;letter-spacing:0.504px;">330 ns</div>
<div class="t" style="left:1083.44px;top:970.00px;font-size:12.5px;color:#cdcdcd;letter-spacing:0.504px;">440 ns</div>
<div class="t" style="left:1257.24px;top:970.00px;font-size:12.5px;color:#cdcdcd;letter-spacing:0.504px;">550 ns</div>
<div class="t" style="left:1431.04px;top:970.00px;font-size:12.5px;color:#cdcdcd;letter-spacing:0.504px;">660 ns</div>
<div class="t" style="left:1604.84px;top:970.00px;font-size:12.5px;color:#cdcdcd;letter-spacing:0.504px;">770 ns</div>
<div class="a" style="left:1749.8px;top:499.4px;width:4.2px;height:4.2px;border-radius:50%;background:#c2c2c2"></div>
<div class="a" style="left:1749.8px;top:508.0px;width:4.2px;height:4.2px;border-radius:50%;background:#c2c2c2"></div>
<div class="a" style="left:1749.8px;top:516.6999999999999px;width:4.2px;height:4.2px;border-radius:50%;background:#c2c2c2"></div>
<div class="a rpanel"></div>
<div class="t" style="left:1795.00px;top:33.00px;font-size:16px;color:#f0f0f0;font-weight:bold;letter-spacing:0.962px;">Add New...</div>
<div class="btn rb" style="left:1767px;top:57px"></div>
<div class="btn rb" style="left:1844px;top:57px"></div>
<div class="btn rb" style="left:1767px;top:106px"></div>
<div class="btn rb" style="left:1844px;top:106px"></div>
<div class="btn rb" style="left:1767px;top:155px"></div>
<div class="btn rb" style="left:1844px;top:155px"></div>
<div class="btn rb" style="left:1767px;top:209px"></div>
<div class="btn rb" style="left:1844px;top:209px"></div>
<div class="t" style="left:1773.75px;top:68.00px;font-size:16px;color:#ececec;letter-spacing:-0.419px;">Cursors</div>
<div class="t" style="left:1851.25px;top:68.00px;font-size:16px;color:#ececec;letter-spacing:0.355px;">Callout</div>
<div class="t" style="left:1768.40px;top:117.00px;font-size:16px;color:#ececec;letter-spacing:0.191px;">Measure</div>
<div class="t" style="left:1853.50px;top:117.00px;font-size:16px;color:#ececec;letter-spacing:-0.461px;">Search</div>
<div class="t" style="left:1774.20px;top:158.00px;font-size:15px;color:#ececec;letter-spacing:0.345px;">Results</div>
<div class="t" style="left:1782.10px;top:174.00px;font-size:15px;color:#ececec;letter-spacing:0.421px;">Table</div>
<div class="t" style="left:1862.10px;top:166.00px;font-size:16px;color:#ececec;letter-spacing:0.456px;">Plot</div>
<div class="t" style="left:1850.70px;top:220.00px;font-size:16px;color:#ececec;letter-spacing:0.708px;">More...</div>
<svg class="a" style="left:1786px;top:214px" width="32" height="32" viewBox="1786 214 32 32">
<g fill="#a8a8a8"><rect x="1789.2" y="216.7" width="2.4" height="2.4"/><rect x="1789.2" y="222.7" width="2.4" height="2.4"/><rect x="1789.2" y="228.9" width="2.4" height="2.4"/><rect x="1789.2" y="235.0" width="2.4" height="2.4"/><rect x="1810.0" y="216.7" width="2.4" height="2.4"/><rect x="1810.0" y="222.7" width="2.4" height="2.4"/><rect x="1810.0" y="228.9" width="2.4" height="2.4"/><rect x="1795.2" y="216.8" width="3.8" height="2.2"/><rect x="1802.5" y="216.8" width="3.8" height="2.2"/><rect x="1795.2" y="235.1" width="3.8" height="2.2"/><rect x="1802.5" y="235.1" width="3.8" height="2.2"/></g>
<path d="M1796.3 221.2H1805.6V230.4H1802.9L1801 233.7L1799.1 230.4H1796.3Z" fill="#1c1c1c" stroke="#a4a4a4" stroke-width="1.2"/>
<rect x="1795.7" y="220.4" width="10.5" height="1.7" fill="#a4a4a4"/>
<path d="M1798.2 224.2H1803.8M1801 224.2V229.2" stroke="#b8b8b8" stroke-width="1.7" fill="none"/>
<path d="M1807.1 231.6L1815 237.2L1811.7 237.9L1813.7 241.2L1812 242.1L1810 238.8L1807.7 240.9Z" fill="#c2c2c2"/>
</svg>
<div class="a" style="left:1763px;top:202px;width:154px;height:1px;background:#57514d"></div>
<div class="a" style="left:1763px;top:257px;width:154px;height:1px;background:#57514d"></div>
<div class="a" style="left:3px;top:998px;width:96px;height:80px;border-radius:5px;background:#cbcbcb;overflow:hidden">
<div class="a" style="left:0;top:0;width:96px;height:20px;background:#fff23a;border-bottom:1px solid #a9a9a9"></div></div>
<div class="t" style="left:8.50px;top:1000.00px;font-size:15px;color:#1c1c1c;letter-spacing:-0.365px;">Ch 1</div>
<div class="t" style="left:8.00px;top:1020.00px;font-size:15px;color:#262626;letter-spacing:0.273px;">490 mV/div</div>
<div class="t" style="left:8.50px;top:1060.00px;font-size:15px;color:#262626;letter-spacing:-0.129px;">1 GHz</div>
<svg class="a" style="left:8px;top:1038px" width="20" height="18" viewBox="8 1038 20 18">
<path d="M10.7 1046.3C10.9 1041.8 14 1040.3 17 1040.3C20.6 1040.3 22.5 1043 22.7 1046.8" fill="none" stroke="#2a2a2a" stroke-width="1.5"/>
<ellipse cx="17.1" cy="1044.2" rx="2.7" ry="3.2" fill="none" stroke="#1e1e1e" stroke-width="1.3"/>
<rect x="9.4" y="1046" width="3.2" height="6" rx="1.2" fill="#c0c0c0" stroke="#6e6e6e" stroke-width="0.9"/>
<rect x="20.9" y="1046.9" width="3.7" height="6" rx="0.8" fill="#f2f2f2" stroke="#6a6a6a" stroke-width="0.9"/>
</svg>
<div class="t" style="left:79.60px;top:1059.00px;font-size:10.5px;color:#1e1e1e;font-weight:bold;">B</div>
<div class="t" style="left:86.60px;top:1064.00px;font-size:8.5px;color:#1e1e1e;font-weight:bold;">w</div>
<div class="btn cb" style="left:604px"><i style="background:#22c5d6"></i></div>
<div class="t" style="left:618.49px;top:1029.00px;font-size:22px;color:#e6e6e6;">2</div>
<div class="btn cb" style="left:652px"><i style="background:#e23a5c"></i></div>
<div class="t" style="left:666.99px;top:1029.00px;font-size:22px;color:#e6e6e6;">3</div>
<div class="btn cb" style="left:700px"><i style="background:#86c81e"></i></div>
<div class="t" style="left:714.99px;top:1029.00px;font-size:22px;color:#e6e6e6;">4</div>
<div class="btn cb" style="left:748px"><i style="background:#f68b1f"></i></div>
<div class="t" style="left:762.99px;top:1029.00px;font-size:22px;color:#e6e6e6;">5</div>
<div class="btn cb" style="left:796px"><i style="background:#2a2ad4"></i></div>
<div class="t" style="left:810.49px;top:1029.00px;font-size:22px;color:#e6e6e6;">6</div>
<div class="btn cb" style="left:844px"><i style="background:#e04ca4"></i></div>
<div class="t" style="left:858.49px;top:1029.00px;font-size:22px;color:#e6e6e6;">7</div>
<div class="btn cb" style="left:892px"><i style="background:#0fcf8c"></i></div>
<div class="t" style="left:906.99px;top:1029.00px;font-size:22px;color:#e6e6e6;">8</div>
<div class="sep" style="left:945px"></div>
<div class="btn cb" style="left:957px"><i style="background:#ef8a1d"></i></div>
<div class="t" style="left:964.50px;top:1017.00px;font-size:15.5px;color:#e6e6e6;letter-spacing:0.213px;">Add</div>
<div class="t" style="left:962.20px;top:1033.00px;font-size:15.5px;color:#e6e6e6;letter-spacing:-0.411px;">New</div>
<div class="t" style="left:959.70px;top:1049.00px;font-size:15.5px;color:#e6e6e6;letter-spacing:0.717px;">Math</div>
<div class="btn cb" style="left:1005px"><i style="background:#b4b4c4"></i></div>
<div class="t" style="left:1012.50px;top:1017.00px;font-size:15.5px;color:#e6e6e6;letter-spacing:0.213px;">Add</div>
<div class="t" style="left:1010.20px;top:1033.00px;font-size:15.5px;color:#e6e6e6;letter-spacing:-0.411px;">New</div>
<div class="t" style="left:1014.55px;top:1049.00px;font-size:15.5px;color:#e6e6e6;letter-spacing:-1.259px;">Ref</div>
<div class="btn cb" style="left:1053px"><i style="background:#b858f0"></i></div>
<div class="t" style="left:1060.50px;top:1017.00px;font-size:15.5px;color:#e6e6e6;letter-spacing:0.213px;">Add</div>
<div class="t" style="left:1058.20px;top:1033.00px;font-size:15.5px;color:#e6e6e6;letter-spacing:-0.411px;">New</div>
<div class="t" style="left:1061.32px;top:1049.00px;font-size:15.5px;color:#e6e6e6;letter-spacing:-1.109px;">Bus</div>
<div class="sep" style="left:1107px"></div>
<div class="btn cb" style="left:1118px"><i style="background:#474747"></i></div>
<div class="t" style="left:1121.50px;top:1033.00px;font-size:16px;color:#e6e6e6;letter-spacing:-0.567px;">DVM</div>
<div class="btn cb" style="left:1172px"><i style="background:#474747"></i></div>
<div class="t" style="left:1178.75px;top:1033.00px;font-size:16px;color:#e6e6e6;letter-spacing:-2.148px;">AFG</div>
<div class="sep" style="left:1226px"></div>
<div class="badge" style="left:1238px;width:213.2px"><div class="h"></div></div>
<div class="t" style="left:1243.75px;top:1000.00px;font-size:15.5px;color:#f2f2f2;letter-spacing:1.046px;">Horizontal</div>
<div class="t" style="left:1243.40px;top:1020.00px;font-size:15px;color:#262626;letter-spacing:0.176px;">110 ns/div</div>
<div class="t" style="left:1356.50px;top:1020.00px;font-size:15px;color:#262626;letter-spacing:0.016px;">1.1 µs</div>
<div class="t" style="left:1243.75px;top:1040.00px;font-size:15px;color:#262626;letter-spacing:-0.344px;">SR: 3.125 GS/s</div>
<div class="t" style="left:1356.50px;top:1040.00px;font-size:15px;color:#262626;letter-spacing:0.194px;">320 ps/pt</div>
<div class="t" style="left:1242.75px;top:1060.00px;font-size:15px;color:#262626;letter-spacing:0.097px;">RL: 3.438 kpts</div>
<div class="t" style="left:1371.25px;top:1060.00px;font-size:15px;color:#262626;letter-spacing:0.698px;">23.3%</div>
<svg class="a" style="left:1355px;top:1060px" width="13" height="15" viewBox="0 0 13 15">
<path d="M1.5 1.5H10.5V10.3H8L6 13.3L4 10.3H1.5Z" fill="#151515" stroke="#f08c22" stroke-width="1.5"/>
<path d="M4 4H8M6 4V8.6" stroke="#e8e8e8" stroke-width="1.5" fill="none"/></svg>
<div class="badge" style="left:1456px;width:171px"><div class="h"></div></div>
<div class="t" style="left:1464.40px;top:1000.00px;font-size:15.5px;color:#f2f2f2;letter-spacing:0.372px;">Trigger</div>
<div class="t" style="left:1521.25px;top:1000.00px;font-size:15.5px;color:#00ff00;letter-spacing:0.149px;">(Visual)</div>
<div class="a" style="left:1462px;top:1020.5px;width:31.5px;height:16.5px;border-radius:5.5px;background:#fff23a;border:1px solid #222"></div>
<div class="t" style="left:1473.60px;top:1020.00px;font-size:15px;color:#1c1c1c;">1</div>
<svg class="a" style="left:1502px;top:1020px" width="22" height="17" viewBox="0 0 22 17">
<path d="M2 14.2H6.6L13.6 3.8H19" fill="none" stroke="#4d4d8a" stroke-width="1.3"/></svg>
<div class="t" style="left:1532.00px;top:1020.00px;font-size:15px;color:#262626;letter-spacing:0.046px;">1.69 V</div>
<div class="badge" style="left:1632px;width:159.5px"><div class="h"></div></div>
<div class="t" style="left:1638.40px;top:1000.00px;font-size:15.5px;color:#f2f2f2;letter-spacing:0.755px;">Acquisition</div>
<div class="t" style="left:1637.50px;top:1020.00px;font-size:15px;color:#262626;letter-spacing:0.634px;">Auto,</div>
<div class="t" style="left:1722.30px;top:1020.00px;font-size:15px;color:#262626;letter-spacing:-0.055px;">Analyze</div>
<div class="t" style="left:1637.50px;top:1040.00px;font-size:15px;color:#262626;letter-spacing:0.079px;">Sample: 12 bits</div>
<div class="t" style="left:1637.50px;top:1060.00px;font-size:15px;color:#262626;letter-spacing:0.325px;">322 Acqs</div>
<div class="sep" style="left:1803px"></div>
<div class="a" style="left:1816px;top:993.5px;width:95px;height:37.5px;border-radius:6px;background:#f0f00a;box-shadow:0 0 2px rgba(240,240,0,.6)"></div>
<div class="t" style="left:1840.00px;top:1003.00px;font-size:15px;color:#000;font-weight:bold;letter-spacing:-0.222px;">Ready</div>
</body></html>
